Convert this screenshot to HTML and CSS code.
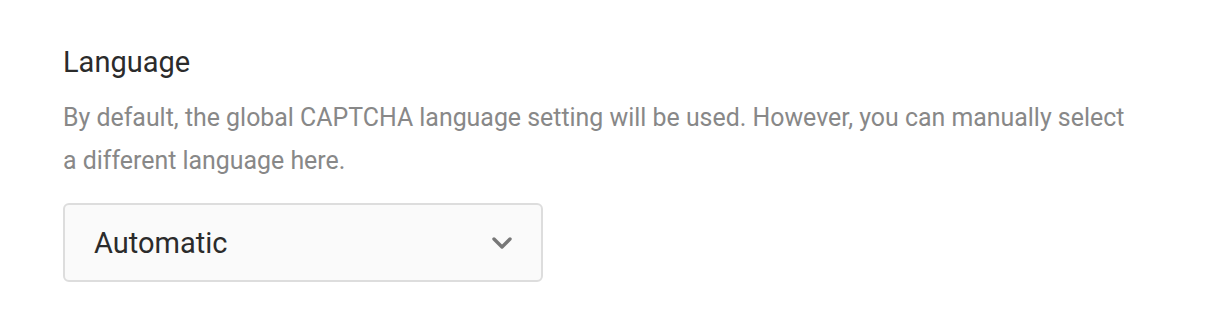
FILE: index.html
```html
<!DOCTYPE html>
<html lang="en">
<head>
    <meta charset="UTF-8">
    <title>Language setting</title>
    <link rel="stylesheet" href="styles.css">
</head>
<body>

<div class="setting">
    <div class="setting-title">Language</div>
    <p class="setting-desc">By default, the global CAPTCHA language setting will be used. However, you can manually select a different language here.</p>

    <div class="select-box">
        <span class="select-value">Automatic</span>
        <svg class="chevron" width="20" height="14" viewBox="0 0 20 14">
            <path d="M2 3 L10 11 L18 3" fill="none" stroke="#777" stroke-width="3.4" stroke-linecap="round" stroke-linejoin="round"/>
        </svg>
    </div>
</div>

</body>
</html>
```

FILE: styles.css
```css
body {
    margin: 0;
    background-color: #fff;
    font-family: Roboto, Arial, sans-serif;
}

.setting {
    padding: 44px 63px 0 63px;
}

.setting-title {
    font-size: 29px;
    font-weight: 400;
    color: #2b2b2b;
    line-height: 36px;
}

.setting-desc {
    margin: 16px 0 0 0;
    width: 1075px;
    font-size: 24.9px;
    line-height: 43px;
    color: #888;
}

.select-box {
    box-sizing: border-box;
    margin-top: 21px;
    width: 480px;
    height: 79px;
    display: flex;
    align-items: center;
    justify-content: space-between;
    padding: 0 29px 0 29px;
    background-color: #fafafa;
    border: 2px solid #ddd;
    border-radius: 6px;
}

.select-value {
    font-size: 29px;
    color: #2b2b2b;
}

.chevron {
    display: block;
}
```
